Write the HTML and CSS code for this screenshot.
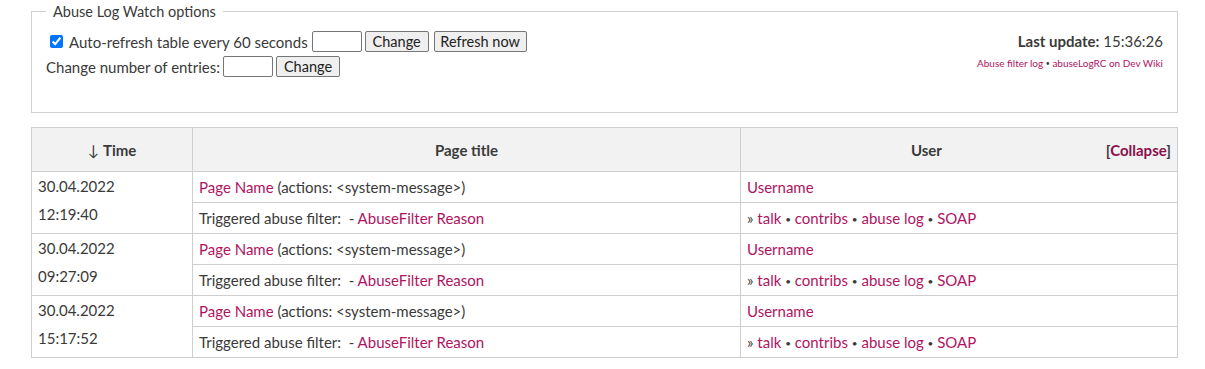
FILE: index.html
```html
<!DOCTYPE html>
<html lang="en">

<head>
    <meta charset="UTF-8">
    <title>Abuse Log Watch</title>
    <link rel="stylesheet" href="styles.css">
</head>

<body>
    <div class="page">
        <!-- Options -->
        <fieldset class="options">
            <legend>Abuse Log Watch options</legend>
            <div class="options-body">
                <div class="controls">
                    <div class="control-row first">
                        <label><input type="checkbox" checked> Auto-refresh table every 60 seconds</label>
                        <input type="text" class="num">
                        <button>Change</button>
                        <button class="wide">Refresh now</button>
                    </div>
                    <div class="control-row">
                        <span>Change number of entries:</span>
                        <input type="text" class="num">
                        <button>Change</button>
                    </div>
                </div>
                <div class="status">
                    <div class="last-update"><b>Last update:</b> 15:36:26</div>
                    <div class="small-links"><a href="#">Abuse filter log</a> <span class="sep">•</span> <a href="#">abuseLogRC on Dev Wiki</a></div>
                </div>
            </div>
        </fieldset>

        <!-- Log table -->
        <table class="log">
            <thead>
                <tr>
                    <th class="col-time"><span class="arrow">↓</span>Time</th>
                    <th class="col-title">Page title</th>
                    <th class="col-user"><span class="collapse">[<a href="#">Collapse</a>]</span>User</th>
                </tr>
            </thead>
            <tbody>
                <tr>
                    <td class="time" rowspan="2">30.04.2022<br>12:19:40</td>
                    <td><a href="#">Page Name</a> (actions: &lt;system-message&gt;)</td>
                    <td><a href="#">Username</a></td>
                </tr>
                <tr>
                    <td>Triggered abuse filter: &nbsp;- <a href="#">AbuseFilter Reason</a></td>
                    <td><span class="raquo">»</span> <a href="#">talk</a> <span class="sep">•</span> <a href="#">contribs</a> <span class="sep">•</span> <a href="#">abuse log</a> <span class="sep">•</span> <a href="#">SOAP</a></td>
                </tr>
                <tr>
                    <td class="time" rowspan="2">30.04.2022<br>09:27:09</td>
                    <td><a href="#">Page Name</a> (actions: &lt;system-message&gt;)</td>
                    <td><a href="#">Username</a></td>
                </tr>
                <tr>
                    <td>Triggered abuse filter: &nbsp;- <a href="#">AbuseFilter Reason</a></td>
                    <td><span class="raquo">»</span> <a href="#">talk</a> <span class="sep">•</span> <a href="#">contribs</a> <span class="sep">•</span> <a href="#">abuse log</a> <span class="sep">•</span> <a href="#">SOAP</a></td>
                </tr>
                <tr>
                    <td class="time" rowspan="2">30.04.2022<br>15:17:52</td>
                    <td><a href="#">Page Name</a> (actions: &lt;system-message&gt;)</td>
                    <td><a href="#">Username</a></td>
                </tr>
                <tr>
                    <td>Triggered abuse filter: &nbsp;- <a href="#">AbuseFilter Reason</a></td>
                    <td><span class="raquo">»</span> <a href="#">talk</a> <span class="sep">•</span> <a href="#">contribs</a> <span class="sep">•</span> <a href="#">abuse log</a> <span class="sep">•</span> <a href="#">SOAP</a></td>
                </tr>
            </tbody>
        </table>
    </div>
</body>

</html>
```

FILE: styles.css
```css
* {
    box-sizing: border-box;
}

body {
    margin: 0;
    background: #fff;
    color: #3a3a3a;
    font-family: 'Lato', 'Liberation Sans', sans-serif;
    font-size: 15px;
}

a {
    color: #b0145f;
    text-decoration: none;
}

.page {
    width: 1147px;
    margin: 3px 0 0 31px;
}

.options {
    margin: 0;
    padding: 0 14px 0 14px;
    border: 1px solid #d0d0d0;
    height: 110px;
}

.options legend {
    padding: 0 7px;
    margin-left: 0;
    font-size: 14.5px;
    color: #3a3a3a;
}

.options-body {
    display: flex;
    justify-content: space-between;
    padding-top: 9px;
}

.control-row {
    display: flex;
    align-items: center;
    gap: 3px;
    height: 25px;
}

.control-row.first {
    margin-left: 4px;
}

.control-row label {
    display: flex;
    align-items: center;
    gap: 6px;
    margin-right: 1px;
}

.control-row input[type=checkbox] {
    margin: 0;
    width: 13px;
    height: 13px;
}

.num {
    width: 50px;
    height: 21px;
    border: 1px solid #767676;
    border-radius: 2px;
    padding: 0 2px;
}

button {
    font-family: inherit;
    font-size: 14.5px;
    color: #222;
    height: 21px;
    width: 64px;
    padding: 0;
    background: #efefef;
    border: 1px solid #767676;
    border-radius: 2px;
}

button.wide {
    width: 93px;
    margin-left: 2px;
}

.status {
    text-align: right;
    padding-top: 2px;
}

.last-update {
    font-size: 15px;
    line-height: 20px;
}

.small-links {
    font-size: 10px;
    margin-top: 6px;
    color: #3a3a3a;
}

.small-links .sep {
    font-size: 7px;
    vertical-align: 1px;
}

.log {
    width: 100%;
    margin-top: 14px;
    border-collapse: collapse;
}

.log th,
.log td {
    border: 1px solid #cfcfcf;
    text-align: left;
    padding: 0 6px;
    height: 31px;
}

.log th {
    height: 44px;
    background: #f2f2f2;
    text-align: center;
    font-weight: bold;
    color: #3a3a3a;
}

.arrow {
    font-weight: normal;
    margin-right: 4px;
}

.col-time {
    width: 161px;
}

.col-title {
    width: 548px;
}

.collapse {
    float: right;
    color: #3a3a3a;
}

.collapse a {
    color: #8c0f4d;
}

.log td.time {
    vertical-align: top;
    line-height: 28px;
    padding-top: 0;
}

.sep {
    font-size: 10px;
    vertical-align: 1px;
    color: #3a3a3a;
}

.raquo {
    color: #3a3a3a;
}
```
